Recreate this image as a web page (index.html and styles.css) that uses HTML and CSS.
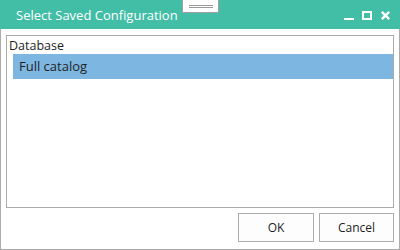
FILE: index.html
```html
<!DOCTYPE html>
<html>
<head>
<meta charset="utf-8">
<link rel="stylesheet" href="styles.css">
</head>
<body>
<div class="window">
  <div class="titlebar">
    <span class="title">Select Saved Configuration</span>
    <div class="grip"><span class="grip-line"></span><span class="grip-line"></span></div>
    <svg class="controls" width="56" height="29" viewBox="0 0 56 29">
      <rect x="0" y="18" width="10" height="2" fill="#fff"/>
      <rect x="19" y="12" width="8" height="7" fill="none" stroke="#fff" stroke-width="2"/>
      <path d="M37.8 11.8 L45.2 19.2 M45.2 11.8 L37.8 19.2" stroke="#fff" stroke-width="2.4"/>
    </svg>
  </div>
  <div class="main">
    <div class="list">
      <div class="list-header">Database</div>
      <div class="row selected">Full catalog</div>
    </div>
    <div class="buttons">
      <button class="btn btn-ok">OK</button>
      <button class="btn btn-cancel">Cancel</button>
    </div>
  </div>
</div>
</body>
</html>
```
FILE: styles.css
```css
html, body {
  margin: 0;
  padding: 0;
  background: #fff;
}
body {
  font-family: "Open Sans", "Liberation Sans", sans-serif;
  color: #1e1e1e;
}
.window {
  width: 400px;
  height: 250px;
  display: flex;
  flex-direction: column;
  position: relative;
}
.titlebar {
  height: 29px;
  flex: none;
  background: #42bda6;
  display: flex;
  align-items: center;
}
.title {
  color: #fff;
  font-size: 13px;
  padding-left: 16px;
  padding-top: 1px;
}
.grip {
  position: absolute;
  left: 182px;
  top: 0;
  width: 37px;
  height: 13px;
  background: #fff;
  border: 1px solid #a0a0a0;
  border-top: none;
  display: flex;
  flex-direction: column;
  align-items: center;
  padding-top: 5px;
  box-sizing: border-box;
  gap: 1px;
}
.grip-line {
  display: block;
  width: 24px;
  height: 1px;
  background: #9a9a9a;
}
.controls {
  margin-left: auto;
  display: block;
}
.main {
  flex: 1;
  border: 1px solid #ababab;
  border-top: none;
  padding: 6px 5px 7px 5px;
  display: flex;
  flex-direction: column;
  gap: 5px;
}
.list {
  flex: 1;
  border: 1px solid #ababab;
}
.list-header {
  font-size: 12.5px;
  line-height: 16px;
  padding: 2px 0 0 2px;
}
.row {
  margin: 0 0 0 6px;
  height: 25px;
  line-height: 25px;
  padding-left: 6px;
  font-size: 13px;
}
.selected {
  background: #7eb6e2;
}
.buttons {
  display: flex;
  justify-content: flex-end;
  gap: 5px;
  height: 29px;
}
.btn {
  font-family: "Open Sans", "Liberation Sans", sans-serif;
  font-size: 12px;
  color: #1e1e1e;
  background: #fdfdfd;
  border: 1px solid #acacac;
  height: 29px;
  padding: 0;
  margin: 0;
}
.btn-ok {
  width: 76px;
}
.btn-cancel {
  width: 75px;
}
```
